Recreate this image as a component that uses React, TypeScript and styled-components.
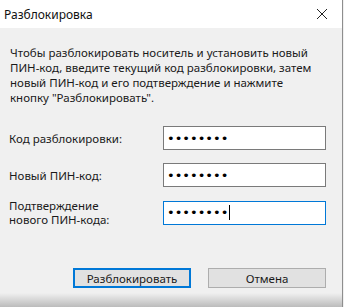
import React from "react";
import styled, { createGlobalStyle } from "styled-components";

const Global = createGlobalStyle`
  html, body { margin: 0; padding: 0; background: #f0f0f0; }
  body { font-family: "Noto Sans", "Segoe UI", sans-serif; color: #000; }
`;

const Window = styled.div`
  width: 342px;
  height: 307px;
  background: #f0f0f0;
  border-right: 1px solid #8e8e8e;
  display: flex;
  flex-direction: column;
  position: relative;
  overflow: hidden;
  &::after {
    content: "";
    position: absolute;
    left: 0; right: 0; bottom: 0;
    height: 14px;
    background: linear-gradient(to bottom, rgba(0,0,0,0), rgba(0,0,0,0.22));
  }
`;

const TitleBar = styled.div`
  height: 28px;
  background: #fff;
  display: flex;
  align-items: center;
  justify-content: space-between;
  padding: 0 14px 0 4px;
  font-size: 12px;
  color: #111;
`;

const Close = styled.div`
  width: 12px;
  height: 12px;
  display: flex;
`;

const Content = styled.div`
  padding: 17px 10px 0 9px;
  display: flex;
  flex-direction: column;
  font-size: 11.5px;
  color: #1a1a1a;
`;

const Description = styled.p`
  margin: 0 0 0 1px;
  line-height: 15px;
  white-space: nowrap;
`;

const Form = styled.div`
  margin-top: 21px;
  display: flex;
  flex-direction: column;
`;

const Row = styled.div<{ $gap: number }>`
  display: grid;
  grid-template-columns: 154px 163px;
  align-items: center;
  margin-top: ${(p) => p.$gap}px;
`;

const Label = styled.div`
  line-height: 14px;
  padding-top: 1px;
`;

const Field = styled.div<{ $focused?: boolean }>`
  height: 24px;
  box-sizing: border-box;
  background: #fff;
  border: 1px solid ${(p) => (p.$focused ? "#0078d7" : "#7a7a7a")};
  display: flex;
  align-items: center;
  padding-left: 3px;
`;

const Dots = styled.span`
  font-family: "DejaVu Sans", sans-serif;
  font-size: 13px;
  color: #000;
  line-height: 1;
`;

const Caret = styled.span`
  width: 1px;
  height: 15px;
  background: #000;
  margin-left: 1px;
`;

const Buttons = styled.div`
  margin-top: 41px;
  display: flex;
  justify-content: flex-end;
  gap: 17px;
  padding-right: 6px;
`;

const Button = styled.div<{ $default?: boolean }>`
  width: 118px;
  height: 20px;
  box-sizing: border-box;
  background: #e1e1e1;
  border: ${(p) => (p.$default ? "2px solid #0078d7" : "1px solid #adadad")};
  display: flex;
  align-items: center;
  justify-content: center;
  font-size: 11.5px;
  color: #1a1a1a;
`;

export default function App() {
  return (
    <>
      <Global />
      <Window>
        <TitleBar>
          <span>Разблокировка</span>
          <Close>
            <svg width="12" height="12" viewBox="0 0 12 12">
              <path d="M1 1 L11 11 M11 1 L1 11" stroke="#222" strokeWidth="1" fill="none" />
            </svg>
          </Close>
        </TitleBar>
        <Content>
          <Description>
            Чтобы разблокировать носитель и установить новый
            <br />
            ПИН-код, введите текущий код разблокировки, затем
            <br />
            новый ПИН-код и его подтверждение и нажмите
            <br />
            кнопку "Разблокировать".
          </Description>
          <Form>
            <Row $gap={0}>
              <Label>Код разблокировки:</Label>
              <Field>
                <Dots>••••••••</Dots>
              </Field>
            </Row>
            <Row $gap={13}>
              <Label>Новый ПИН-код:</Label>
              <Field>
                <Dots>••••••••</Dots>
              </Field>
            </Row>
            <Row $gap={11}>
              <Label>
                Подтверждение
                <br />
                нового ПИН-кода:
              </Label>
              <Field $focused>
                <Dots>••••••••</Dots>
                <Caret />
              </Field>
            </Row>
          </Form>
          <Buttons>
            <Button $default>Разблокировать</Button>
            <Button>Отмена</Button>
          </Buttons>
        </Content>
      </Window>
    </>
  );
}
